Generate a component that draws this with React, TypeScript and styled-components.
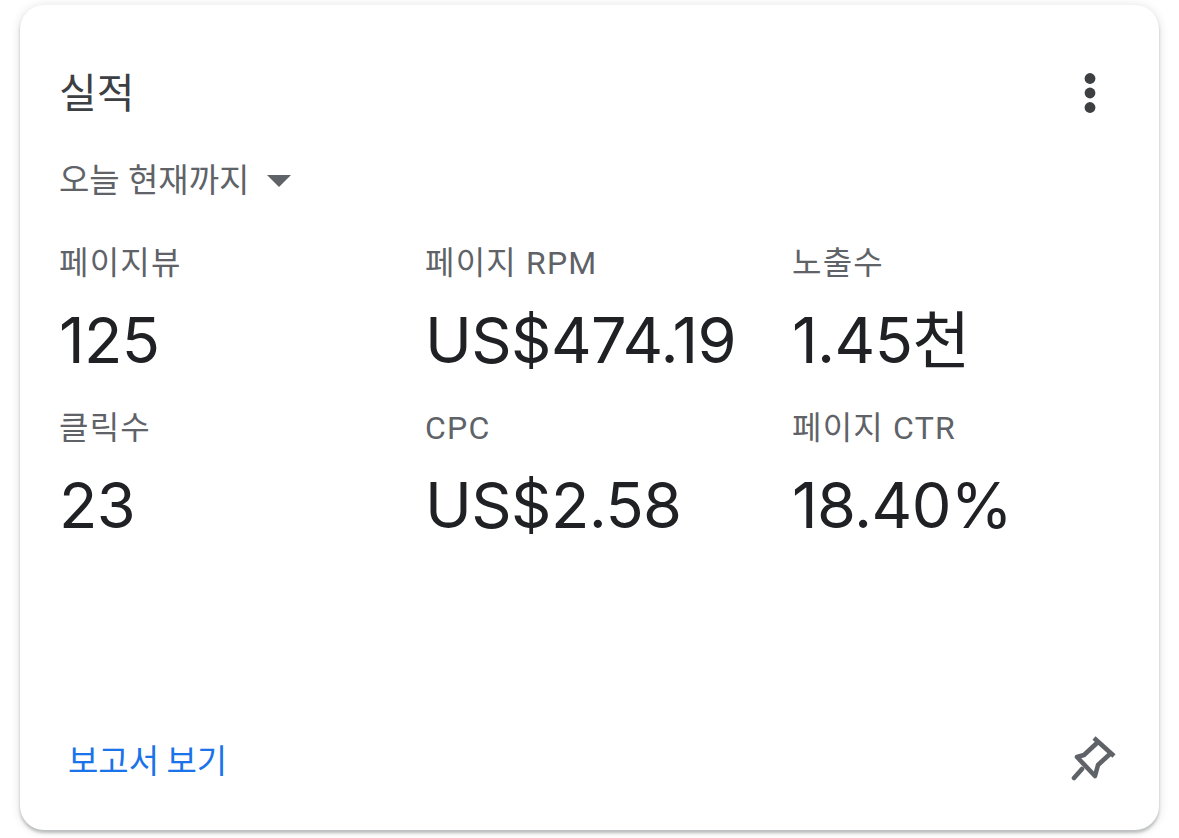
import * as React from 'react';
import styled, { createGlobalStyle } from 'styled-components';

const Global = createGlobalStyle`
  html, body { margin: 0; padding: 0; background: #fff; }
  body { font-family: Roboto, "Noto Sans CJK KR", sans-serif; }
  * { box-sizing: border-box; }
`;

const Page = styled.div`
  width: 1179px;
  height: 838px;
  padding: 5px 20px 8px 20px;
  overflow: hidden;
`;

const Card = styled.section`
  width: 1139px;
  height: 825px;
  background: #fff;
  border-radius: 24px;
  box-shadow: 0 3px 3px rgba(60, 64, 67, 0.28), 0 1px 8px 1px rgba(60, 64, 67, 0.14);
  display: flex;
  flex-direction: column;
  padding: 55px 40px 49px 39px;
`;

const Header = styled.header`
  display: flex;
  align-items: center;
  justify-content: space-between;
  height: 60px;
`;

const Title = styled.h2`
  margin: 0;
  font: 400 41px/60px "Noto Sans CJK KR", sans-serif;
  color: #3c4043;
`;

const MoreIcon = styled.svg`
  display: block;
  flex: none;
  margin: 6px 23px 0 0;
`;

const Dropdown = styled.div`
  display: flex;
  align-items: center;
  gap: 18px;
  margin-top: 39px;
  font: 400 33px/44px Roboto, "Noto Sans CJK KR", sans-serif;
  color: #5f6368;
`;

const Grid = styled.div`
  display: grid;
  grid-template-columns: 366px 367px 1fr;
  margin-top: 38px;
  margin-right: -40px;
`;

const Metric = styled.div`
  height: 165px;
`;

const Label = styled.div`
  font: 400 32px/44px Roboto, "Noto Sans CJK KR", sans-serif;
  letter-spacing: 1.2px;
  color: #5f6368;
  white-space: nowrap;
`;

const Value = styled.div`
  font: 400 63px/80px Inter, "Noto Sans CJK KR", sans-serif;
  letter-spacing: -0.6px;
  color: #202124;
  margin-top: 15px;
  white-space: nowrap;
`;

const Footer = styled.footer`
  margin-top: auto;
  display: flex;
  align-items: center;
  justify-content: space-between;
  height: 44px;
`;

const ReportLink = styled.a`
  font: 400 33px/44px "Noto Sans CJK KR", sans-serif;
  color: #1a73e8;
  padding-left: 9px;
`;

const Icon = styled.svg`
  display: block;
  flex: none;
`;

const metrics = [
  { label: '페이지뷰', value: '125' },
  { label: '페이지 RPM', value: 'US$474.19' },
  { label: '노출수', value: '1.45천' },
  { label: '클릭수', value: '23' },
  { label: 'CPC', value: 'US$2.58' },
  { label: '페이지 CTR', value: '18.40%' },
];

const App = () => (
  <Page>
    <Global />
    <Card>
      <Header>
        <Title>실적</Title>
        <MoreIcon width="12" height="40" viewBox="0 0 12 40" fill="#3c4043">
          <circle cx="6" cy="5.5" r="5.4" />
          <circle cx="6" cy="20" r="5.4" />
          <circle cx="6" cy="34.5" r="5.4" />
        </MoreIcon>
      </Header>
      <Dropdown>
        오늘 현재까지
        <Icon width="24" height="12" viewBox="0 0 24 12" fill="#5f6368">
          <path d="M0 0h24L12 12z" />
        </Icon>
      </Dropdown>
      <Grid>
        {metrics.map(m => (
          <Metric key={m.label}>
            <Label>{m.label}</Label>
            <Value>{m.value}</Value>
          </Metric>
        ))}
      </Grid>
      <Footer>
        <ReportLink>보고서 보기</ReportLink>
        <Icon width="48" height="48" viewBox="0 0 48 48" fill="none" stroke="#5f6368" strokeWidth="4.6" strokeLinejoin="round">
          <path d="M23 3l20 18" />
          <path d="M27 7L13 20l-7 2 18 19 3-11 13-12" />
          <path d="M11 34l-8 9" strokeLinecap="round" />
        </Icon>
      </Footer>
    </Card>
  </Page>
);

export default () => {
  return <App />;
};
